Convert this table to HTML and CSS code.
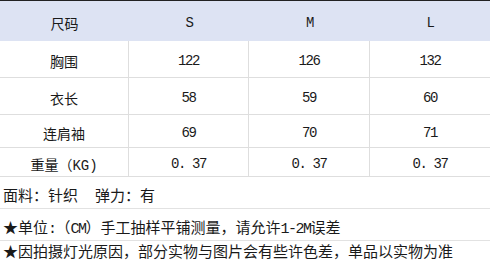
FILE: index.html
```html
<!DOCTYPE html>
<html lang="zh-CN">
<head>
    <meta charset="UTF-8">
    <meta name="viewport" content="width=device-width, initial-scale=1.0">
    <title>尺码表</title>
    <link rel="stylesheet" href="styles.css">
</head>
<body>
    <div class="size-table">
        <div class="row head">
            <div class="cell">尺码</div>
            <div class="cell num">S</div>
            <div class="cell num">M</div>
            <div class="cell num">L</div>
        </div>
        <div class="row r1">
            <div class="cell">胸围</div>
            <div class="cell num">122</div>
            <div class="cell num">126</div>
            <div class="cell num">132</div>
        </div>
        <div class="row r2">
            <div class="cell">衣长</div>
            <div class="cell num">58</div>
            <div class="cell num">59</div>
            <div class="cell num">60</div>
        </div>
        <div class="row r3">
            <div class="cell">连肩袖</div>
            <div class="cell num">69</div>
            <div class="cell num">70</div>
            <div class="cell num">71</div>
        </div>
        <div class="row r4">
            <div class="cell">重量（KG)</div>
            <div class="cell num">0. 37</div>
            <div class="cell num">0. 37</div>
            <div class="cell num">0. 37</div>
        </div>
    </div>
    <div class="notes">
        <div class="note"><span>面料：针织<span class="gap"></span>弹力：有</span></div>
        <div class="note"><span>★单位<span class="lat">:</span>（<span class="lat">CM</span>）手工抽样平铺测量，请允许<span class="lat">1-2M</span>误差</span></div>
        <div class="note last"><span>★因拍摄灯光原因，部分实物与图片会有些许色差，单品以实物为准</span></div>
    </div>
</body>
</html>
```

FILE: styles.css
```css
body {
    margin: 0;
    background: #fff;
    color: #1a1a1a;
    font-family: "Liberation Mono", "Noto Sans CJK SC", monospace;
    width: 490px;
    height: 260px;
    overflow: hidden;
}
.size-table {
    font-size: 14px;
}
.row {
    display: grid;
    grid-template-columns: 129px 120px 121px 120px;
    box-sizing: border-box;
    border-bottom: 1px solid #dedede;
}
.cell {
    display: flex;
    justify-content: center;
    align-items: center;
    padding-top: 4px;
    border-right: 1px solid #dedede;
}
.cell:last-child {
    border-right: none;
}
.cell.num {
    letter-spacing: -1.4px;
}
.row.head {
    height: 41px;
    border-top: 1px solid #222;
    border-bottom: none;
    background-color: #dde3f3;
}
.row.head .cell {
    border-right: none;
}
.row.r1 { height: 37px; }
.row.r2 { height: 37px; }
.row.r3 { height: 33px; }
.row.r4 { height: 29px; }
.notes {
    font-size: 15px;
}
.note {
    height: 32px;
    box-sizing: border-box;
    border-bottom: 1px solid #e2e2e2;
    padding: 5px 0 0 3px;
    display: flex;
    align-items: center;
    white-space: nowrap;
}
.note .lat {
    letter-spacing: -1.5px;
}
.note.last {
    height: 19px;
    padding-top: 1px;
    border-bottom: none;
}
.gap {
    display: inline-block;
    width: 17px;
}
```
